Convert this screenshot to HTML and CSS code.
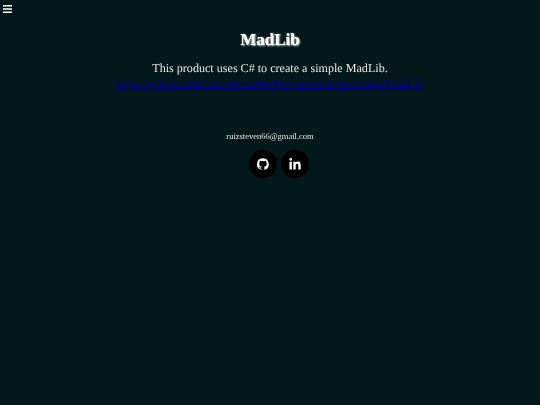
FILE: index.html
```html
<!DOCTYPE html>
<html lang="en">
<head>
<meta charset="utf-8">
<title>MadLib</title>
<link rel="stylesheet" href="styles.css">
</head>
<body>
<nav class="topbar">
  <button class="menu" aria-label="Menu">
    <svg viewBox="0 0 9 8" width="9" height="8"><path d="M0 .7H9M0 4H9M0 7.300H9" stroke="#fff" stroke-width="1.500"/></svg>
  </button>
</nav>
<main class="page">
  <h1 class="title">MadLib</h1>
  <p class="desc">This product uses C# to create a simple MadLib.<br><a href="#">https://github.com/ruizsteven66/Professional/tree/main/MadLib</a></p>
  <footer class="contact">
    <p class="email">ruizsteven66@gmail.com</p>
    <div class="socials">
      <a class="social" href="#" aria-label="GitHub">
        <svg viewBox="0 0 24 24" width="12" height="12"><path fill="#fff" d="M12 .3a12 12 0 0 0-3.800 23.400c.6.100.8-.3.8-.6v-2c-3.300.7-4-1.600-4-1.600-.6-1.400-1.400-1.800-1.400-1.800-1-.7.1-.7.1-.7 1.200.1 1.800 1.200 1.800 1.200 1 1.800 2.800 1.300 3.500 1 .1-.8.4-1.300.8-1.600-2.700-.3-5.500-1.300-5.500-6 0-1.200.5-2.300 1.200-3.100-.1-.4-.5-1.600.1-3.200 0 0 1-.3 3.300 1.200a11.500 11.500 0 0 1 6 0c2.300-1.500 3.300-1.200 3.300-1.200.6 1.600.2 2.800.1 3.200.8.800 1.200 1.900 1.200 3.100 0 4.600-2.800 5.600-5.500 5.900.4.400.8 1.100.8 2.200v3.300c0 .3.2.7.8.6A12 12 0 0 0 12 .3"/></svg>
      </a>
      <a class="social" href="#" aria-label="LinkedIn">
        <svg viewBox="0 0 448 512" width="12" height="13"><path fill="#fff" d="M100.300 448H7.400V148.900h92.900zM53.800 108.100C24.100 108.100 0 83.500 0 53.800a53.800 53.800 0 0 1 107.600 0c0 29.700-24.100 54.300-53.800 54.300zM447.900 448h-92.700V302.400c0-34.700-.7-79.200-48.300-79.200-48.300 0-55.700 37.700-55.700 76.700V448h-92.800V148.900h89.100v40.800h1.300c12.400-23.500 42.700-48.300 87.900-48.300 94 0 111.300 61.900 111.300 142.300V448z"/></svg>
      </a>
    </div>
  </footer>
</main>
</body>
</html>
```
FILE: styles.css
```css
html, body {
  margin: 0;
  height: 100%;
}
body {
  background: #03181a;
  color: #e6e6e6;
  font-family: "Liberation Serif", "Times New Roman", serif;
  text-rendering: geometricPrecision;
  overflow: hidden;
}
.topbar {
  height: 14px;
  padding: 4px 0 0 3px;
  display: flex;
}
.menu {
  background: none;
  border: 0;
  padding: 0;
  height: 9px;
  line-height: 0;
}
.page {
  text-align: center;
  filter: blur(0.4px);
}
.title {
  margin: 12px 0 0;
  font-size: 17px;
  line-height: 20px;
  color: #fff;
  text-shadow: 1px 1px 2px #ccc, 0 0 1px #ccc;
}
.desc {
  margin: 11px 0 0;
  font-size: 12.1px;
  line-height: 15px;
}
.desc a {
  color: #00008b;
}
.contact {
  margin-top: 39px;
}
.email {
  margin: 0;
  font-size: 8.5px;
  line-height: 12px;
}
.socials {
  margin-top: 8px;
  display: flex;
  justify-content: center;
  gap: 4px;
  padding-left: 18px;
}
.social {
  width: 28px;
  height: 28px;
  border-radius: 50%;
  background: #000;
  display: flex;
  align-items: center;
  justify-content: center;
}
```
